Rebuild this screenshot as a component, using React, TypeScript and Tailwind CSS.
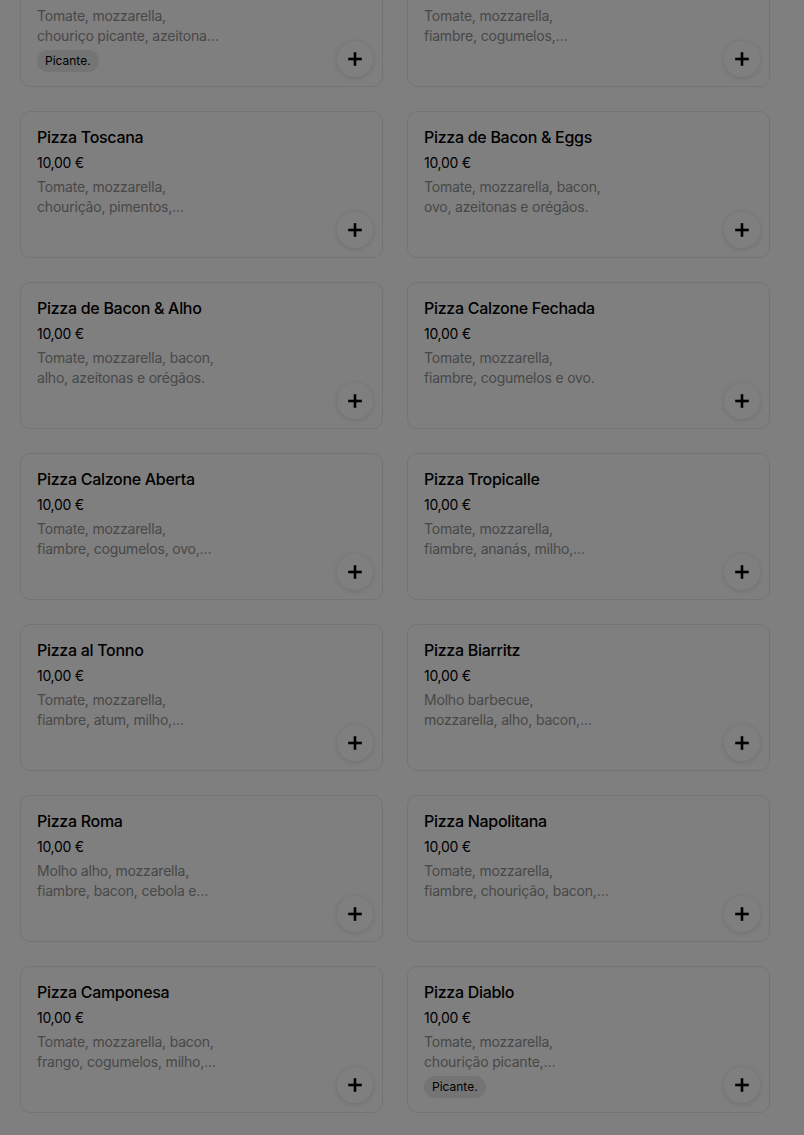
import React from "react";

type Item = {
    name: string;
    desc: [string, string];
    spicy?: boolean;
};

const items: Item[] = [
    { name: "Pizza Diavola", desc: ["Tomate, mozzarella,", "chouriço picante, azeitona…"], spicy: true },
    { name: "Pizza Capricciosa", desc: ["Tomate, mozzarella,", "fiambre, cogumelos,…"] },
    { name: "Pizza Toscana", desc: ["Tomate, mozzarella,", "chourição, pimentos,…"] },
    { name: "Pizza de Bacon & Eggs", desc: ["Tomate, mozzarella, bacon,", "ovo, azeitonas e orégãos."] },
    { name: "Pizza de Bacon & Alho", desc: ["Tomate, mozzarella, bacon,", "alho, azeitonas e orégãos."] },
    { name: "Pizza Calzone Fechada", desc: ["Tomate, mozzarella,", "fiambre, cogumelos e ovo."] },
    { name: "Pizza Calzone Aberta", desc: ["Tomate, mozzarella,", "fiambre, cogumelos, ovo,…"] },
    { name: "Pizza Tropicalle", desc: ["Tomate, mozzarella,", "fiambre, ananás, milho,…"] },
    { name: "Pizza al Tonno", desc: ["Tomate, mozzarella,", "fiambre, atum, milho,…"] },
    { name: "Pizza Biarritz", desc: ["Molho barbecue,", "mozzarella, alho, bacon,…"] },
    { name: "Pizza Roma", desc: ["Molho alho, mozzarella,", "fiambre, bacon, cebola e…"] },
    { name: "Pizza Napolitana", desc: ["Tomate, mozzarella,", "fiambre, chourição, bacon,…"] },
    { name: "Pizza Camponesa", desc: ["Tomate, mozzarella, bacon,", "frango, cogumelos, milho,…"] },
    { name: "Pizza Diablo", desc: ["Tomate, mozzarella,", "chourição picante,…"], spicy: true },
];

function PlusIcon() {
    return (
        <svg className="size-4 text-black" viewBox="0 0 16 16" fill="none" stroke="currentColor" strokeWidth="2.6" strokeLinecap="square">
            <line x1="8" y1="2.5" x2="8" y2="13.5" />
            <line x1="2.5" y1="8" x2="13.5" y2="8" />
        </svg>
    );
}

function MenuCard({ item }: { item: Item }) {
    return (
        <div className="flex h-[147px] justify-between rounded-[10px] border border-[#e8e8e8] bg-white pb-[9px] pl-4 pr-[9px] pt-[15px]">
            <div className="flex flex-col">
                <div className="text-base font-medium leading-5 tracking-[-0.3px] text-black">{item.name}</div>
                <div className="mt-[6px] text-sm leading-5 tracking-[-0.3px] text-black">10,00 €</div>
                <div className="mt-1 text-sm leading-5 tracking-[-0.2px] text-[#909090]">
                    <span className="block whitespace-nowrap">{item.desc[0]}</span>
                    <span className="block whitespace-nowrap">{item.desc[1]}</span>
                </div>
                {item.spicy && (
                    <span className="mt-1 flex h-[22px] w-fit items-center rounded-full bg-[#e8e8e8] px-2 text-xs text-black">
                        Picante.
                    </span>
                )}
            </div>
            <button className="flex size-9 items-center justify-center self-end rounded-full bg-white shadow-[0_1px_6px_rgba(0,0,0,0.14)]">
                <PlusIcon />
            </button>
        </div>
    );
}

export default function App() {
    return (
        <div className="min-h-screen overflow-hidden bg-white font-['Inter','Liberation_Sans',sans-serif]">
            <div className="-mt-[60px] grid grid-cols-[363px_363px] gap-6 pl-5">
                {items.map((item) => (
                    <MenuCard key={item.name} item={item} />
                ))}
            </div>
            <div className="fixed inset-0 bg-black/50" />
        </div>
    );
}
